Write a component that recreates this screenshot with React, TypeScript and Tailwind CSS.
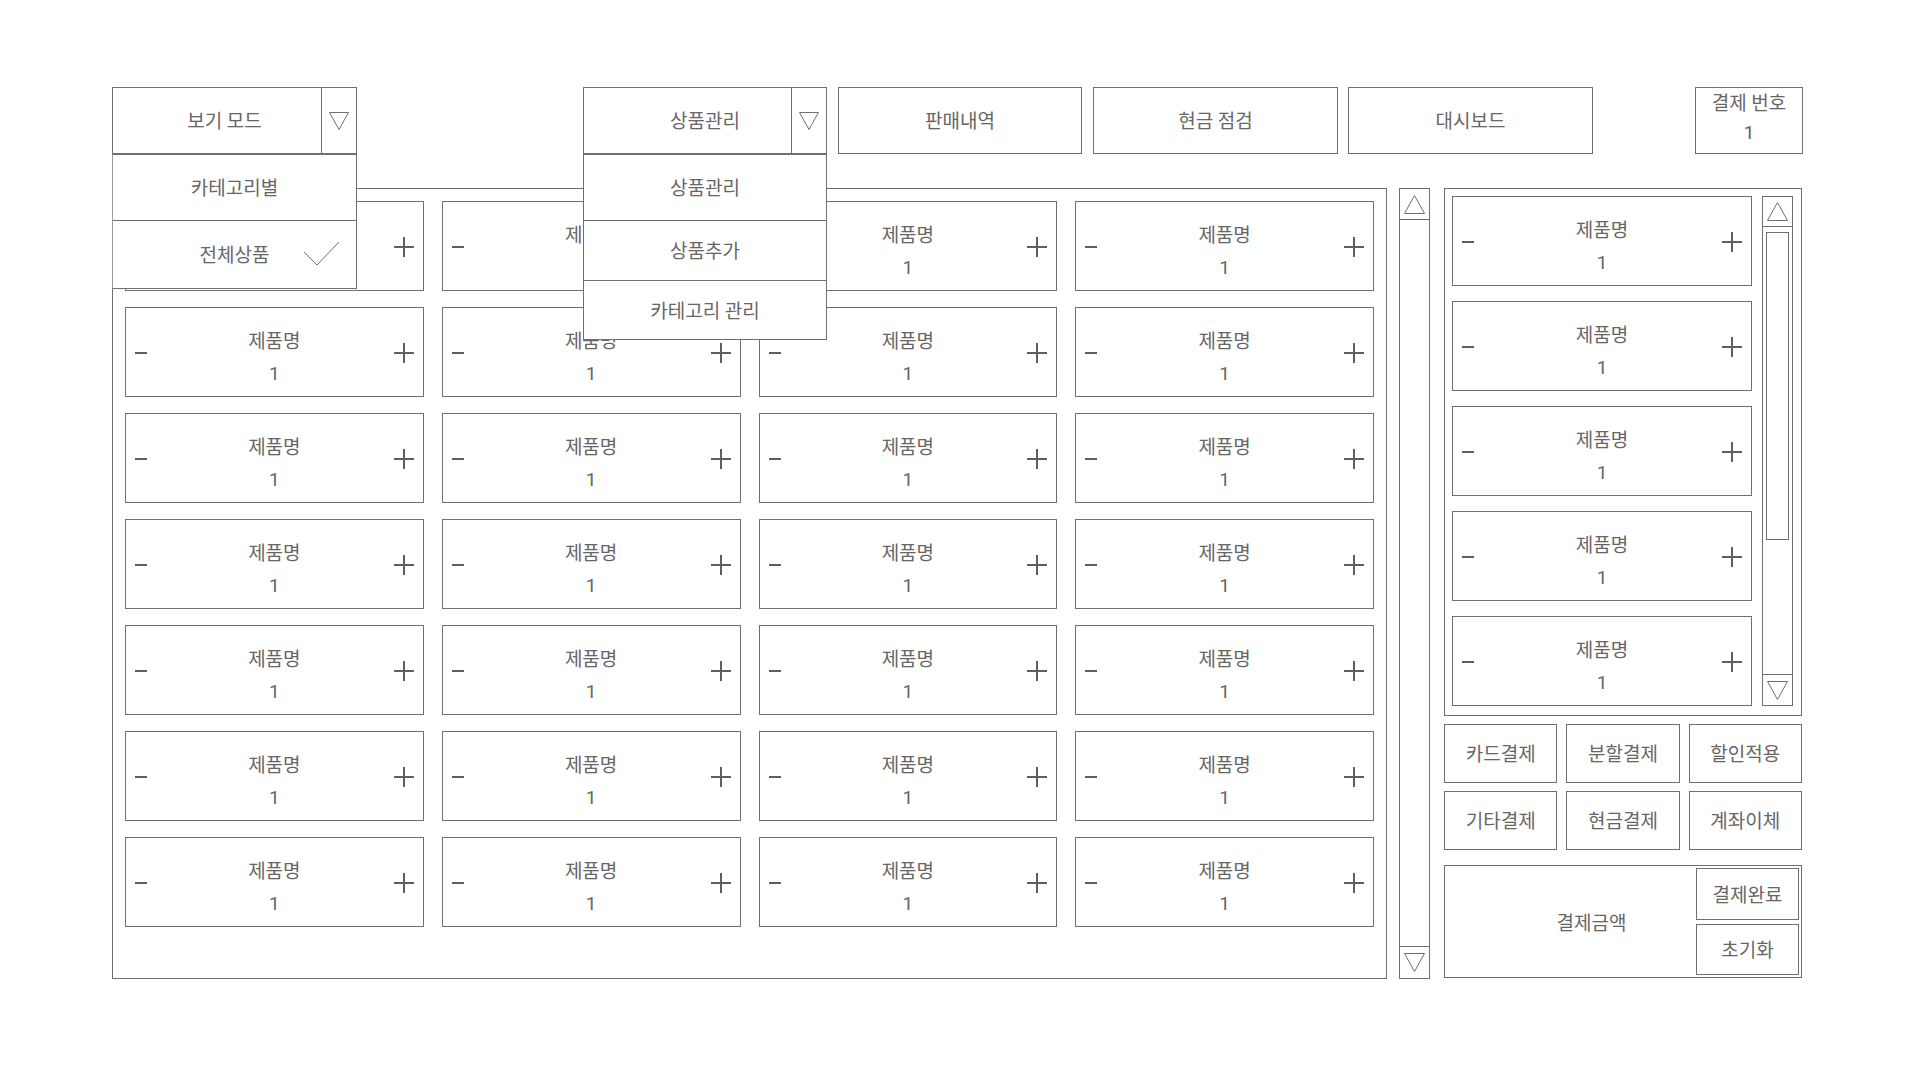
import React from "react";

const B = "border border-[#707070]";

function DownTri({ w = 20, h = 18 }: { w?: number; h?: number }) {
  return (
    <svg width={w} height={h} viewBox={`0 0 ${w} ${h}`}>
      <path d={`M0.5 0.5 L${w - 0.5} 0.5 L${w / 2} ${h - 0.5} Z`} fill="none" stroke="#707070" strokeWidth="1" />
    </svg>
  );
}

function UpTri({ w = 21, h = 19 }: { w?: number; h?: number }) {
  return (
    <svg width={w} height={h} viewBox={`0 0 ${w} ${h}`}>
      <path d={`M0.5 ${h - 0.5} L${w - 0.5} ${h - 0.5} L${w / 2} 0.5 Z`} fill="none" stroke="#707070" strokeWidth="1" />
    </svg>
  );
}

function Plus() {
  return (
    <svg width="20" height="20" viewBox="0 0 20 20">
      <path d="M10 0 V20 M0 10 H20" stroke="#5e5e5e" strokeWidth="2" />
    </svg>
  );
}

function Minus() {
  return (
    <svg width="12" height="2" viewBox="0 0 12 2">
      <rect x="0" y="0" width="12" height="2" fill="#5e5e5e" />
    </svg>
  );
}

function Card({ w = "w-full" }: { w?: string }) {
  return (
    <div className={`${B} ${w} h-[90px] bg-white grid grid-cols-[40px_1fr_40px]`}>
      <div className="flex items-center pl-[9px] pt-[1px]">
        <Minus />
      </div>
      <div className="flex flex-col items-center pt-[18px] leading-[32px]">
        <span>제품명</span>
        <span>1</span>
      </div>
      <div className="flex items-center justify-end pr-[9px] pt-[1px]">
        <Plus />
      </div>
    </div>
  );
}

function Btn({ children }: { children: React.ReactNode }) {
  return <div className={`${B} h-[59px] flex items-center justify-center pt-[3px]`}>{children}</div>;
}

export default function App() {
  const mainCards = Array.from({ length: 28 });
  const sideCards = Array.from({ length: 5 });
  return (
    <div className="w-[1920px] h-[1080px] bg-white text-[#666] text-[19px] font-normal font-['Roboto','Noto_Sans_CJK_KR',sans-serif] overflow-hidden">
      <div className="pl-[112px] pt-[87px] w-[1803px]">
        {/* Header */}
        <div className="flex h-[67px] relative z-10">
          <div className="relative w-[245px]">
            <div className={`${B} h-full flex bg-white`}>
              <div className="flex-1 flex items-center justify-center pl-[15px] pt-[3px]">보기 모드</div>
              <div className="w-[35px] border-l border-[#707070] flex items-center justify-center pt-[1px]">
                <DownTri />
              </div>
            </div>
            <div className="absolute left-0 top-full w-[245px] border border-[#707070] border-l-[#9a9a9a] bg-white">
              <div className="h-[65px] flex items-center justify-center pt-[4px]">카테고리별</div>
              <div className="h-[68px] border-t border-[#707070] flex items-center justify-center relative pt-[4px]">
                전체상품
                <svg className="absolute right-[16px] top-[20px]" width="37" height="25" viewBox="0 0 37 25">
                  <polyline points="1,11 14,24 36,1" fill="none" stroke="#707070" strokeWidth="1" />
                </svg>
              </div>
            </div>
          </div>

          <div className="relative w-[244px] ml-[226px]">
            <div className={`${B} h-full flex bg-white`}>
              <div className="flex-1 flex items-center justify-center pl-[35px] pt-[3px]">상품관리</div>
              <div className="w-[35px] border-l border-[#707070] flex items-center justify-center pt-[1px]">
                <DownTri />
              </div>
            </div>
            <div className="absolute left-0 top-full w-[244px] border border-[#707070] bg-white">
              <div className="h-[65px] flex items-center justify-center pt-[4px]">상품관리</div>
              <div className="h-[60px] border-t border-[#707070] flex items-center justify-center pt-[4px]">상품추가</div>
              <div className="h-[59px] border-t border-[#707070] flex items-center justify-center pt-[4px]">카테고리 관리</div>
            </div>
          </div>

          <div className={`${B} w-[244px] ml-[11px] flex items-center justify-center pt-[3px]`}>판매내역</div>
          <div className={`${B} w-[245px] ml-[11px] flex items-center justify-center pt-[3px]`}>현금 점검</div>
          <div className={`${B} w-[245px] ml-[10px] flex items-center justify-center pt-[3px]`}>대시보드</div>
          <div className={`${B} w-[108px] ml-auto flex flex-col items-center leading-[30px] pt-[1px]`}>
            <span>결제 번호</span>
            <span className="-mt-[1px]">1</span>
          </div>
        </div>

        {/* Body */}
        <div className="flex mt-[34px]">
          <div className={`${B} w-[1275px] h-[791px] px-[12px] pt-[12px]`}>
            <div className="grid grid-cols-4 gap-x-[18px] gap-y-[16px]">
              {mainCards.map((_, i) => (
                <Card key={i} />
              ))}
            </div>
          </div>

          <div className={`${B} w-[31px] h-[791px] ml-[12px] flex flex-col`}>
            <div className="h-[31px] border-b border-[#707070] flex items-center justify-center">
              <UpTri />
            </div>
            <div className="flex-1" />
            <div className="h-[32px] border-t border-[#707070] flex items-center justify-center">
              <DownTri w={21} h={19} />
            </div>
          </div>

          <div className="w-[358px] ml-[14px] flex flex-col">
            <div className={`${B} h-[528px] flex pl-[7px] pr-[8px] pt-[7px] gap-[10px]`}>
              <div className="flex flex-col gap-[15px] w-[300px]">
                {sideCards.map((_, i) => (
                  <Card key={i} />
                ))}
              </div>
              <div className={`${B} w-[31px] h-[510px] flex flex-col`}>
                <div className="h-[30px] border-b border-[#707070] flex items-center justify-center">
                  <UpTri />
                </div>
                <div className="flex-1 px-[3px] pt-[5px] pb-[134px]">
                  <div className="h-full border border-[#707070]" />
                </div>
                <div className="h-[31px] border-t border-[#707070] flex items-center justify-center">
                  <DownTri w={21} h={19} />
                </div>
              </div>
            </div>

            <div className="grid grid-cols-3 gap-x-[9px] gap-y-[8px] mt-[8px]">
              <Btn>카드결제</Btn>
              <Btn>분할결제</Btn>
              <Btn>할인적용</Btn>
              <Btn>기타결제</Btn>
              <Btn>현금결제</Btn>
              <Btn>계좌이체</Btn>
            </div>

            <div className={`${B} h-[113px] mt-[15px] flex`}>
              <div className="flex-1 flex items-center justify-center pl-[42px] pt-[6px]">결제금액</div>
              <div className="w-[105px] flex flex-col gap-[4px] pt-[2px] pb-[2px] pr-[2px]">
                <div className={`${B} flex-1 flex items-center justify-center pt-[4px]`}>결제완료</div>
                <div className={`${B} flex-1 flex items-center justify-center pt-[3px]`}>초기화</div>
              </div>
            </div>
          </div>
        </div>
      </div>
    </div>
  );
}
